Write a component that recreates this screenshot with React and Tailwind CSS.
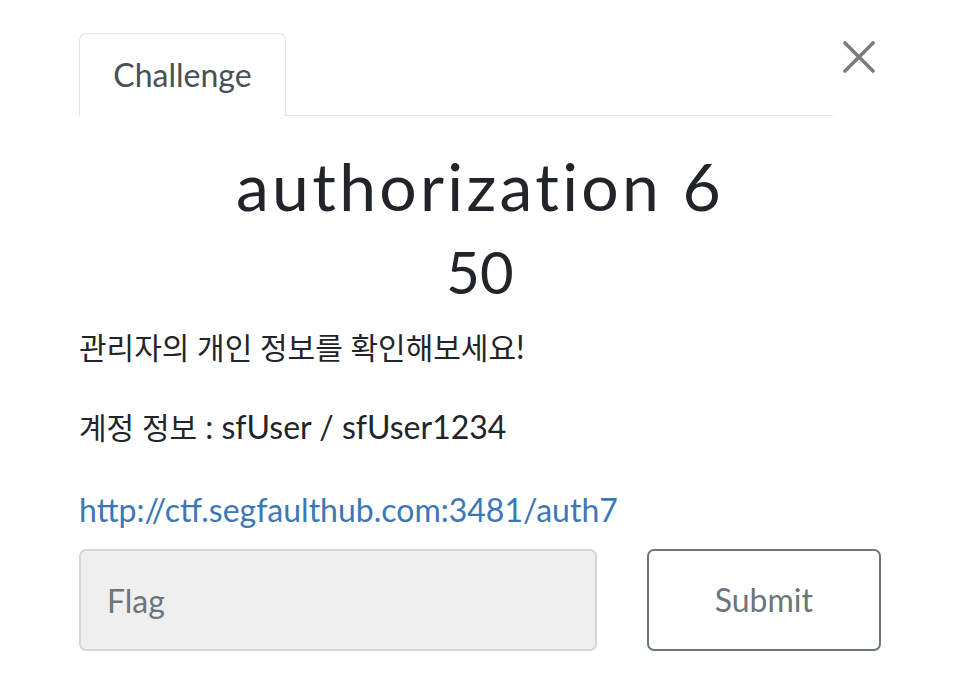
export default function App() {
  return (
    <div className="min-h-[684px] w-[964px] bg-white pl-[79px] pt-[33px] font-['Lato','Noto_Sans_CJK_KR',sans-serif] text-[#212529]">
      <div className="w-[802px]">
        {/* tabs + close */}
        <div className="flex items-start">
          <div className="flex w-[754px] border-b border-[#dee2e6]">
            <div className="-mb-px flex h-[83px] w-[207px] items-center justify-center rounded-t-[7px] border border-[#dee2e6] border-b-white bg-white text-[32px] text-[#495057]">
              Challenge
            </div>
          </div>
          <button className="ml-[10px] mt-[8px] h-[32px] w-[32px] text-[#7b7b7b]">
            <svg viewBox="0 0 32 32" width="32" height="32" fill="none" stroke="currentColor" strokeWidth="3.6" strokeLinecap="round">
              <path d="M2 2 L30 30 M30 2 L2 30" />
            </svg>
          </button>
        </div>

        {/* title */}
        <h3 className="mt-[30px] text-center text-[66px] leading-[80px] tracking-[0.05em]">authorization 6</h3>
        <h4 className="mt-[11px] text-center text-[58px] leading-[70px]">50</h4>

        {/* description */}
        <div className="mt-[17px] text-[32px] leading-[46px]">
          <p className="mb-[34px]"><span className="text-[30px]">관리자의 개인 정보를 확인해보세요</span>!</p>
          <p className="mb-[37px]"><span className="text-[30px]">계정 정보</span> : sfUser / sfUser1234</p>
          <p>
            <a href="#" className="text-[#3c77b8]">http://ctf.segfaulthub.com:3481/auth7</a>
          </p>
        </div>

        {/* flag form */}
        <div className="mt-[16px] flex gap-[50px]">
          <input
            placeholder="Flag"
            className="h-[102px] w-[519px] rounded-[7px] border-2 border-[#d6d6d6] bg-[#efefef] px-[26px] text-[32px] placeholder:text-[#6c757d]"
          />
          <button className="h-[102px] w-[235px] rounded-[7px] border-2 border-[#6c757d] bg-white text-[32px] text-[#6c757d]">
            Submit
          </button>
        </div>
      </div>
    </div>
  )
}
